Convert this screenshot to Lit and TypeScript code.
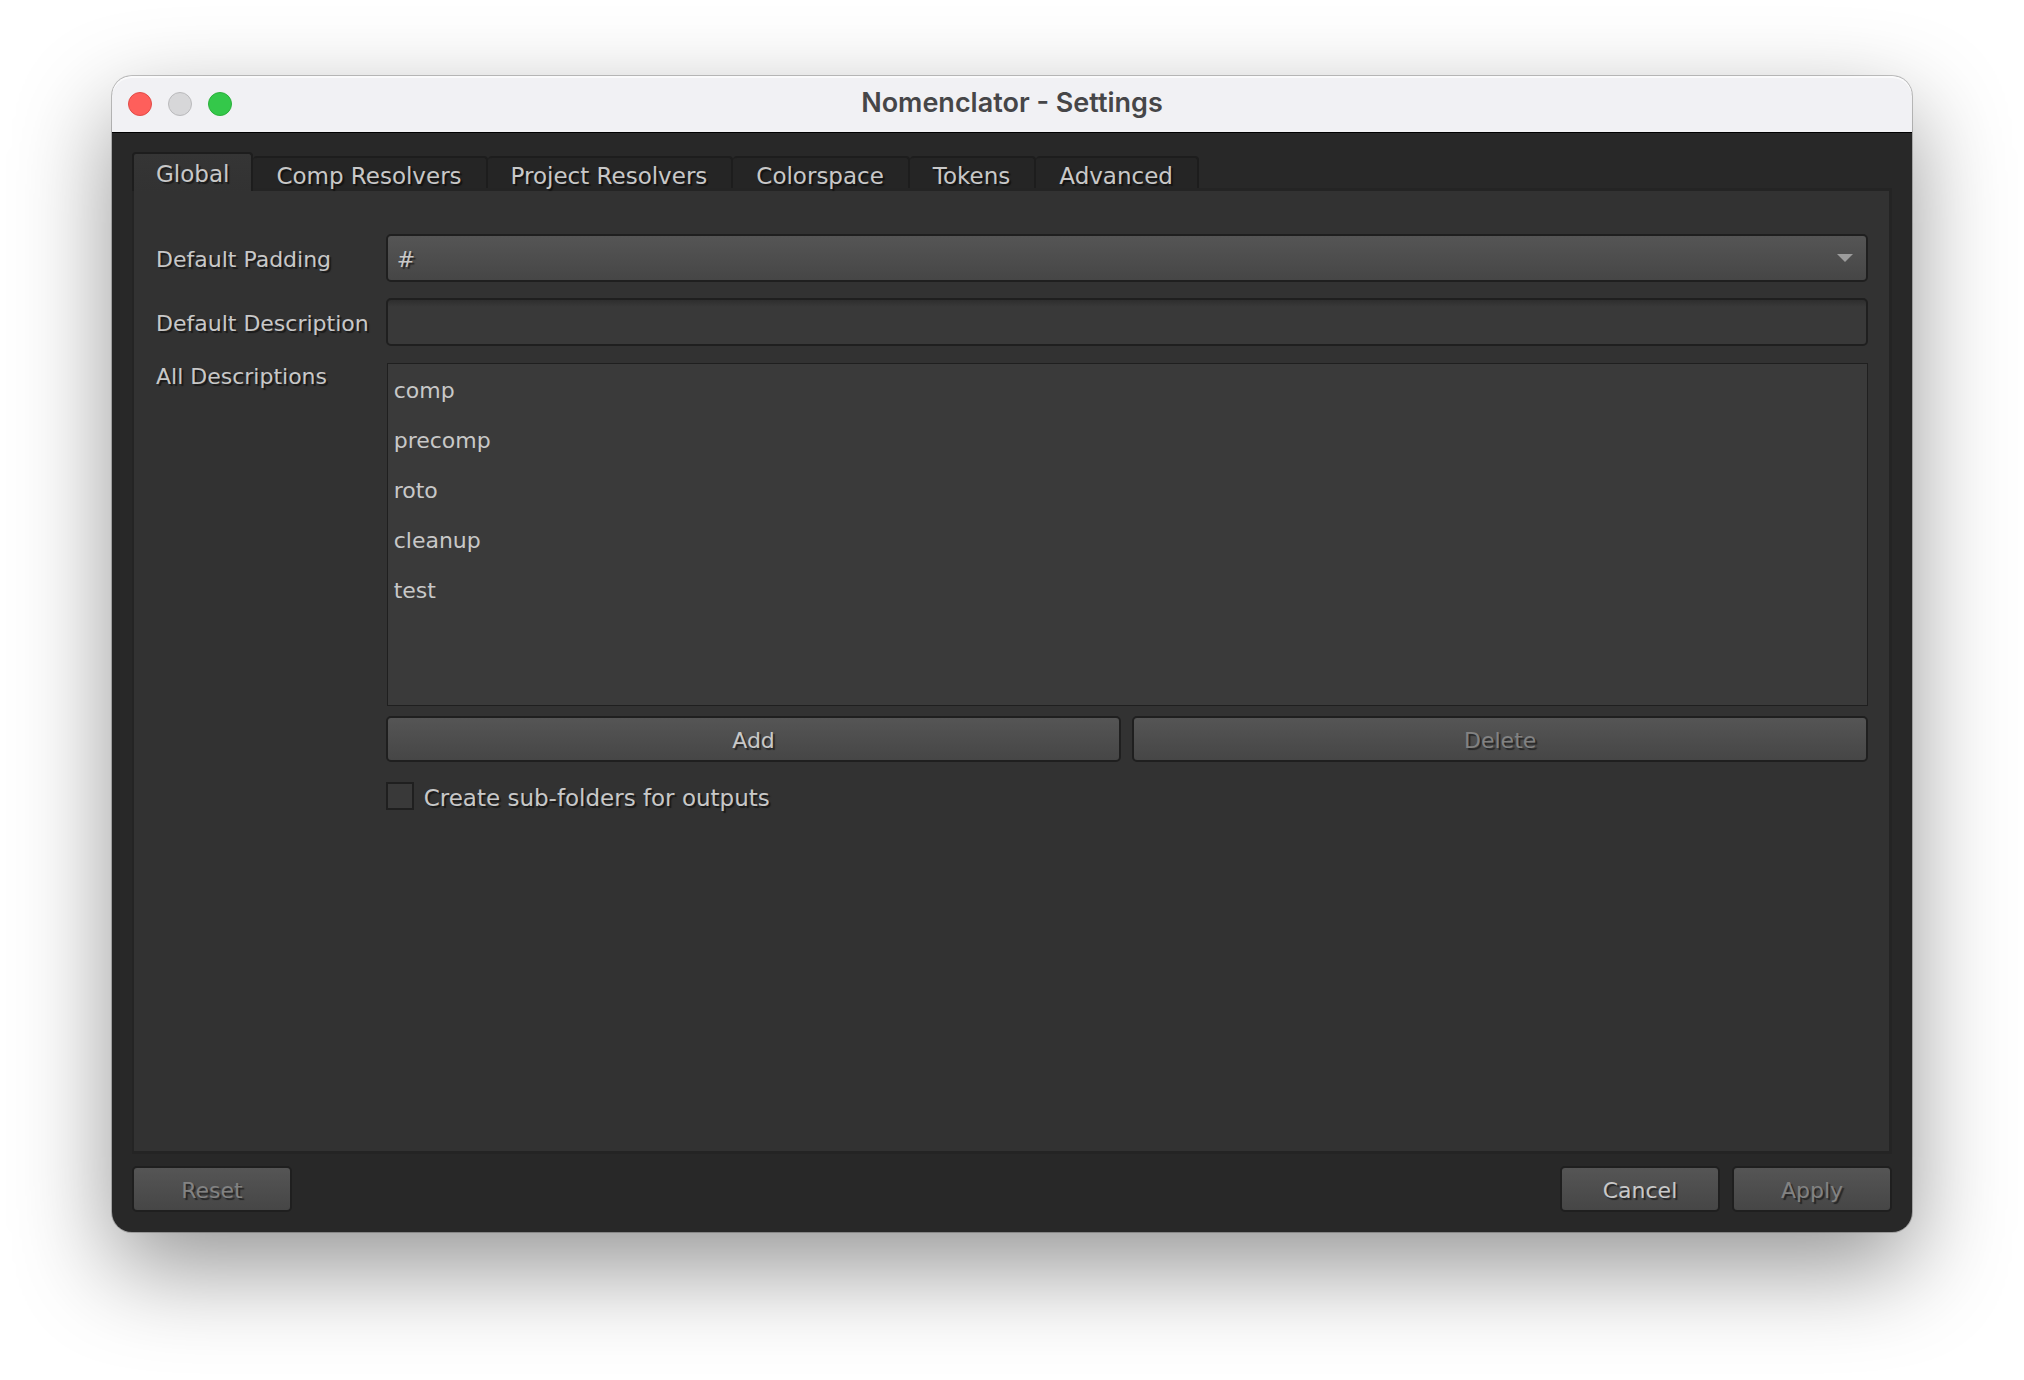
import { LitElement, html, css } from "lit";
import { customElement, state } from "lit/decorators.js";
import { classMap } from "lit/directives/class-map.js";

const TABS = ["Global", "Comp Resolvers", "Project Resolvers", "Colorspace", "Tokens", "Advanced"];
const PADDINGS = ["#", "##", "###", "####"];

@customElement("app-root")
export class AppRoot extends LitElement {
  static styles = css`
    :host {
      display: flex;
      box-sizing: border-box;
      min-height: 100vh;
      padding: 76px 112px 148px;
      background: #fff;
      overflow: hidden;
      color: #c8c8c8;
      font-family: "DejaVu Sans", Verdana, sans-serif;
      font-size: 22px;
      line-height: 26px;
    }
    * {
      box-sizing: border-box;
    }
    button,
    input,
    select {
      margin: 0;
      font: inherit;
      color: inherit;
      text-shadow: inherit;
    }
    .window {
      flex: 1;
      min-width: 0;
      display: flex;
      flex-direction: column;
      border-radius: 20px;
      background: #282828;
      box-shadow:
        0 0 0 1px rgba(0, 0, 0, 0.22),
        0 36px 96px rgba(0, 0, 0, 0.42);
    }
    .titlebar {
      display: grid;
      grid-template-columns: 1fr auto 1fr;
      align-items: center;
      height: 57px;
      padding: 0 16px;
      border-bottom: 1px solid #000;
      border-radius: 20px 20px 0 0;
      background: #f1f1f4;
      box-shadow: inset 0 2px 0 #fafafb;
    }
    .lights {
      display: flex;
      gap: 16px;
    }
    .light {
      width: 24px;
      height: 24px;
      padding: 0;
      border: 1px solid #e24b47;
      border-radius: 50%;
      background: #fe5f5b;
    }
    .light.minimise {
      border-color: #bababc;
      background: #d7d7d9;
    }
    .light.zoom {
      border-color: #2bb03a;
      background: #34c84a;
    }
    .title {
      margin: 0;
      padding-bottom: 2px;
      color: #464648;
      font-family: Inter, sans-serif;
      font-size: 27px;
      font-weight: 600;
      line-height: 32px;
    }
    .body {
      flex: 1;
      display: flex;
      flex-direction: column;
      padding: 19px 20px 20px;
      text-shadow: 2px 2px 1px rgba(0, 0, 0, 0.5);
    }
    .tabs {
      display: flex;
      align-items: flex-end;
    }
    .tab {
      z-index: 1;
      height: 32px;
      padding: 5px 24px 0 23px;
      border: 2px solid #1d1d1d;
      border-width: 2px 2px 0 0;
      border-radius: 4px 4px 0 0;
      background: #252525;
      font-size: 23px;
      white-space: nowrap;
    }
    .tab.active {
      height: 39px;
      margin-bottom: -3px;
      padding: 4px 22px 1px;
      border-left-width: 2px;
      background: linear-gradient(#353535, #323232);
    }
    .pane {
      flex: 1;
      padding: 43px 21px 40px 22px;
      border: 3px solid #242424;
      border-left-width: 2px;
      background: #323232;
    }
    .form {
      display: grid;
      grid-template-columns: auto 1fr;
      column-gap: 17px;
      row-gap: 16px;
    }
    .label {
      align-self: center;
      padding-top: 3px;
    }
    .label.top {
      align-self: start;
      padding-top: 2px;
    }
    .select-wrap {
      display: grid;
      align-items: center;
    }
    .select,
    .arrow {
      grid-area: 1 / 1;
    }
    .arrow {
      justify-self: end;
      margin-right: 15px;
      pointer-events: none;
    }
    .select,
    .text,
    .button {
      min-width: 0;
      width: 100%;
      border: 2px solid #1f1f1f;
      border-radius: 5px;
    }
    .select {
      appearance: none;
      height: 48px;
      padding: 3px 9px 0;
      background: linear-gradient(#555, #464646);
    }
    .text {
      height: 48px;
      padding: 3px 8px 0;
      background: linear-gradient(#2e2e2e, #393939 7px);
    }
    .column {
      display: flex;
      flex-direction: column;
      padding-top: 1px;
    }
    .list {
      height: 343px;
      margin: 0 0 0 1px;
      padding: 2px 0;
      border: 1px solid #1f1f1f;
      background: #3a3a3a;
      list-style: none;
      text-shadow: none;
      overflow: auto;
    }
    .item {
      padding: 12px 6px;
    }
    .item.selected {
      background: #4d4d4d;
    }
    .row {
      display: flex;
      gap: 11px;
      margin-top: 10px;
    }
    .button {
      flex: 1;
      height: 46px;
      padding: 3px 0 0;
      background: linear-gradient(#555, #464646);
    }
    .button:disabled {
      color: #828282;
    }
    .check {
      display: flex;
      align-items: center;
      align-self: flex-start;
      gap: 10px;
      margin-top: 18px;
      font-size: 23px;
    }
    .caption {
      padding-top: 5px;
    }
    .box {
      appearance: none;
      width: 28px;
      height: 28px;
      border: 2px solid #1f1f1f;
      background: #393939;
    }
    .box:checked {
      background: #c8c8c8;
      box-shadow: inset 0 0 0 5px #393939;
    }
    .footer {
      display: flex;
      gap: 12px;
      margin-top: 12px;
    }
    .footer .button {
      flex: none;
      width: 160px;
    }
    .footer .reset {
      margin-right: auto;
    }
  `;

  @state() private tab = "Global";
  @state() private descriptions = ["comp", "precomp", "roto", "cleanup", "test"];
  @state() private selected = -1;

  private add() {
    this.descriptions = [...this.descriptions, "untitled"];
  }

  private remove() {
    this.descriptions = this.descriptions.filter((_, i) => i !== this.selected);
    this.selected = -1;
  }

  private renderGlobal() {
    return html`
      <div class="form">
        <label class="label" for="padding">Default Padding</label>
        <div class="select-wrap">
          <select class="select" id="padding">
            ${PADDINGS.map((p) => html`<option>${p}</option>`)}
          </select>
          <svg class="arrow" width="16" height="8" viewBox="0 0 16 8" aria-hidden="true">
            <path d="M0 0H16L8 8Z" fill="#9c9c9c" />
          </svg>
        </div>

        <label class="label" for="description">Default Description</label>
        <input class="text" id="description" type="text" />

        <span class="label top" id="descriptions">All Descriptions</span>
        <div class="column">
          <ul class="list" role="listbox" aria-labelledby="descriptions">
            ${this.descriptions.map(
              (d, i) => html`
                <li
                  class=${classMap({ item: true, selected: i === this.selected })}
                  role="option"
                  aria-selected=${i === this.selected}
                  @click=${() => (this.selected = i)}
                >${d}</li>
              `
            )}
          </ul>
          <div class="row">
            <button class="button" @click=${this.add}>Add</button>
            <button class="button" ?disabled=${this.selected < 0} @click=${this.remove}>Delete</button>
          </div>
          <label class="check">
            <input class="box" type="checkbox" />
            <span class="caption">Create sub-folders for outputs</span>
          </label>
        </div>
      </div>
    `;
  }

  render() {
    return html`
      <main class="window">
        <header class="titlebar">
          <div class="lights">
            <button class="light" aria-label="Close"></button>
            <button class="light minimise" aria-label="Minimise" disabled></button>
            <button class="light zoom" aria-label="Zoom"></button>
          </div>
          <h1 class="title">Nomenclator - Settings</h1>
        </header>
        <div class="body">
          <div class="tabs" role="tablist">
            ${TABS.map(
              (t) => html`
                <button
                  class=${classMap({ tab: true, active: t === this.tab })}
                  role="tab"
                  aria-selected=${t === this.tab}
                  @click=${() => (this.tab = t)}
                >${t}</button>
              `
            )}
          </div>
          <section class="pane" role="tabpanel">
            ${this.tab === "Global" ? this.renderGlobal() : ""}
          </section>
          <footer class="footer">
            <button class="button reset" disabled>Reset</button>
            <button class="button">Cancel</button>
            <button class="button" disabled>Apply</button>
          </footer>
        </div>
      </main>
    `;
  }
}
